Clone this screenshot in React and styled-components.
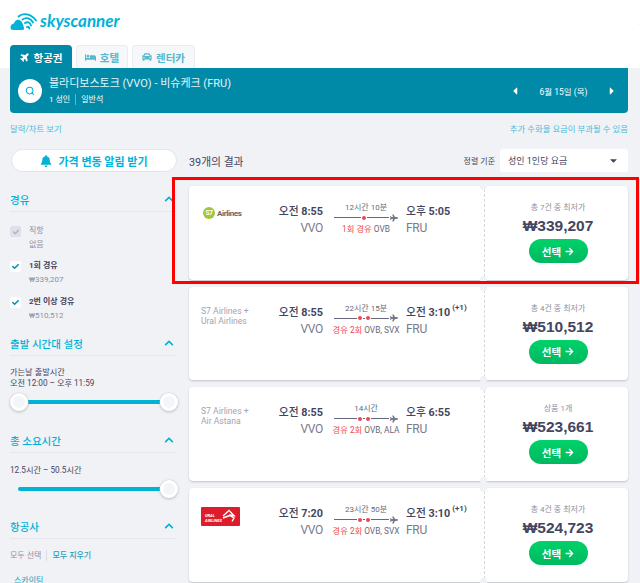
import React from 'react'
import styled, { createGlobalStyle } from 'styled-components'
import { FaPlane, FaBed, FaCar, FaBell, FaChevronUp, FaArrowRight, FaCheck, FaCaretLeft, FaCaretRight, FaCaretDown } from 'react-icons/fa'
import { Search } from 'lucide-react'

const FONT = `Roboto, "Noto Sans CJK KR", sans-serif`
const CYAN = '#00b2d6'
const INK = '#444560'
const GREY = '#8f90a0'

const Global = createGlobalStyle`
  html, body { margin: 0; padding: 0; background: #f1f2f6; height: 100%; overflow: hidden; }
  * { box-sizing: border-box; }
  body { font-family: ${FONT}; color: ${INK}; }
`

const Page = styled.div`
  width: 640px;
  height: 583px;
  overflow: hidden;
`
const Header = styled.header`
  height: 68px;
  background: #fff;
  padding: 0 0 0 10px;
  display: flex;
  flex-direction: column;
`
const TopRow = styled.div`
  height: 45px;
  display: flex;
  justify-content: space-between;
  align-items: flex-start;
  padding-top: 9px;
`
const Logo = styled.div`
  display: flex;
  align-items: center;
  gap: 2px;
  color: ${CYAN};
  font: italic 700 17px/24px Lato, sans-serif;
`
const HelpLink = styled.a`
  color: ${CYAN};
  font-size: 9px;
  margin-right: -24px;
  margin-top: 6px;
  flex-shrink: 0;
`
const Tabs = styled.nav`
  display: flex;
  gap: 4px;
  height: 23px;
`
const Tab = styled.div`
  display: flex;
  align-items: center;
  justify-content: center;
  gap: 4px;
  width: ${p => p.$w}px;
  border-radius: 4px 4px 0 0;
  border: 1px solid ${p => (p.$active ? '#008aa8' : '#ebecf1')};
  border-bottom: 0;
  font-size: 10.5px;
  font-weight: 700;
  color: ${p => (p.$active ? '#fff' : '#55b8cf')};
  background: ${p => (p.$active ? '#008aa8' : '#f6f7f9')};
  & > svg.tilt { transform: rotate(-45deg); }
`
const Banner = styled.section`
  margin: 0 12px 0 10px;
  height: 45px;
  background: #008aa8;
  border-radius: 0 0 4px 4px;
  display: flex;
  align-items: center;
  padding: 0 8px;
  color: #fff;
`
const SearchCircle = styled.div`
  width: 24px;
  height: 24px;
  border-radius: 50%;
  background: #fff;
  color: ${CYAN};
  display: flex;
  align-items: center;
  justify-content: center;
  margin-right: 7px;
`
const RouteBox = styled.div`
  flex: 1;
  display: flex;
  flex-direction: column;
  gap: 3px;
`
const RouteTitle = styled.div`
  font-size: 11px;
  line-height: 14px;
  color: #e4f3f7;
`
const RouteMeta = styled.div`
  font-size: 8px;
  line-height: 11px;
  display: flex;
  gap: 5px;
  & > span + span { border-left: 1px solid #5fb4c8; padding-left: 5px; }
`
const DatePicker = styled.div`
  display: flex;
  align-items: center;
  justify-content: space-between;
  width: 109px;
  font-size: 8.5px;
  margin-right: 2px;
`
const LinksRow = styled.div`
  margin: 0 12px 0 10px;
  height: 28px;
  display: flex;
  align-items: center;
  justify-content: space-between;
  font-size: 8.4px;
  color: #49bcd6;
  padding-top: 1px;
`
const Main = styled.div`
  display: grid;
  grid-template-columns: 167px 439px;
  column-gap: 12px;
  margin-left: 10px;
  padding-top: 8px;
`
const Sidebar = styled.aside`
  display: flex;
  flex-direction: column;
`
const AlertButton = styled.button`
  width: 166px;
  height: 23px;
  margin-left: 1px;
  border: 1px solid #e4e5ec;
  border-radius: 12px;
  background: #fff;
  color: ${CYAN};
  font: 700 11px ${FONT};
  display: flex;
  align-items: center;
  justify-content: center;
  gap: 6px;
  margin-bottom: 16px;
  padding: 0;
`
const FilterHead = styled.div`
  height: 24px;
  display: flex;
  align-items: center;
  justify-content: space-between;
  padding-right: 3px;
  border-bottom: 1px solid #e6e7ec;
  color: ${CYAN};
  font-size: 10.5px;
  font-weight: 500;
  padding-bottom: 1px;
  margin-top: ${p => p.$mt || 0}px;
`
const CheckRow = styled.div`
  display: flex;
  gap: 8px;
  height: ${p => p.$h || 35.5}px;
  padding-top: ${p => p.$pt || 0}px;
`
const Box = styled.div`
  width: 11px;
  height: 11px;
  margin-top: 2px;
  border-radius: 2px;
  background: ${p => (p.$off ? '#dfe0e7' : '#fff')};
  color: ${p => (p.$off ? '#a9aab8' : '#008aa8')};
  display: flex;
  align-items: center;
  justify-content: center;
  flex-shrink: 0;
`
const CheckText = styled.div`
  font-size: 8px;
  line-height: 14px;
  font-weight: ${p => (p.$off ? 400 : 700)};
  color: ${p => (p.$off ? GREY : INK)};
`
const CheckSub = styled.div`
  font-size: 8px;
  line-height: 14px;
  font-weight: 400;
  color: ${GREY};
`
const SliderLabel = styled.div`
  font-size: 8.2px;
  line-height: 11px;
  color: ${INK};
  margin-top: ${p => p.$mt || 0}px;
`
const Track = styled.div`
  position: relative;
  height: 4px;
  background: ${CYAN};
  margin: ${p => p.$mt}px 7px 0 8px;
  border-radius: 2px;
`
const Thumb = styled.span`
  position: absolute;
  top: -7px;
  ${p => (p.$end ? 'right: -8px;' : 'left: -8px;')}
  width: 18px;
  height: 18px;
  border-radius: 50%;
  background: #f4f5f8;
  border: 3px solid #fff;
  box-shadow: 0 0 0 0.5px #d5d6dd, 0 1px 3px rgba(0, 0, 0, 0.25);
`
const AirlineLinks = styled.div`
  display: flex;
  gap: 5px;
  font-size: 8px;
  line-height: 11px;
  margin-top: 11px;
  color: ${GREY};
  & > b { color: #1b9fbd; border-left: 1px solid #dcdde4; padding-left: 5px; font-weight: 500; }
`
const AllianceLabel = styled.div`
  font-size: 8px;
  color: #1b9fbd;
  margin: 13px 0 0 4px;
`
const Results = styled.div`
  display: flex;
  flex-direction: column;
`
const ResultBar = styled.div`
  height: 23px;
  display: flex;
  align-items: center;
  justify-content: space-between;
  margin-bottom: 14px;
  font-size: 10.8px;
`
const SortBox = styled.div`
  display: flex;
  align-items: center;
  gap: 5px;
  font-size: 8px;
`
const SortSelect = styled.div`
  width: 128px;
  height: 23px;
  background: #fff;
  border-radius: 3px;
  display: flex;
  align-items: center;
  justify-content: space-between;
  padding: 0 9px 0 8px;
  font-size: 9px;
`
const CardList = styled.div`
  display: flex;
  flex-direction: column;
  gap: 7.2px;
`
const Card = styled.article`
  position: relative;
  height: 93.5px;
  background: #fff;
  border-radius: 4px;
  box-shadow: 0 1px 2px rgba(0, 0, 0, 0.2);
  display: flex;
`
const Highlight = styled.div`
  position: absolute;
  top: -9px;
  left: -17px;
  right: -11px;
  bottom: -4px;
  border: 3px solid #f00;
  pointer-events: none;
`
const Notch = styled.span`
  position: absolute;
  left: 291px;
  ${p => (p.$bottom ? 'bottom: -3px;' : 'top: -3px;')}
  width: 7px;
  height: 7px;
  border-radius: 50%;
  background: #f1f2f6;
`
const Leg = styled.div`
  width: 295px;
  flex-shrink: 0;
  display: flex;
  padding: 19px 0 0 12px;
`
const Carrier = styled.div`
  width: 75px;
  flex-shrink: 0;
`
const CarrierName = styled.div`
  font-size: 8.6px;
  line-height: 10px;
  color: #a3a4b2;
`
const CarrierLogo = styled.div`
  display: flex;
  align-items: center;
  gap: 2px;
  margin: 2px 0 0 2px;
  font: 700 8px Roboto, sans-serif;
  letter-spacing: -0.4px;
  color: #666;
`
const RedLogo = styled.div`
  width: 39px;
  height: 19px;
  background: #dd1c2c;
  border-radius: 1px;
  color: #fff;
  font: italic 800 4px/5px Roboto, sans-serif;
  padding: 6px 0 0 4px;
  position: relative;
  & svg { position: absolute; right: 4px; top: 2px; }
`
const TimeCol = styled.div`
  width: ${p => p.$w}px;
  flex-shrink: 0;
  text-align: ${p => (p.$right ? 'right' : 'left')};
`
const Time = styled.div`
  font-size: 10.8px;
  line-height: 15px;
  white-space: nowrap;
  font-weight: 500;
  margin-top: -1px;
  & b { font-weight: 700; }
  & sup { font-size: 8px; font-weight: 700; line-height: 0; vertical-align: 6px; margin-left: 2px; }
`
const Code = styled.div`
  font-size: 12px;
  line-height: 17px;
  color: #797a8c;
  letter-spacing: -0.3px;
  margin-top: 1px;
`
const Timeline = styled.div`
  width: 64px;
  margin: -3px 8px 0 11px;
  flex-shrink: 0;
  display: flex;
  flex-direction: column;
  align-items: center;
`
const Duration = styled.div`
  font-size: 8px;
  line-height: 11px;
  color: #66677c;
  white-space: nowrap;
`
const LineRow = styled.div`
  position: relative;
  width: 64px;
  height: 9px;
  display: flex;
  align-items: center;
  color: #77788a;
`
const Line = styled.div`
  flex: 1;
  height: 1px;
  background: #66677c;
  margin-right: 1px;
  padding-left: 5px;
  display: flex;
  align-items: center;
  justify-content: center;
  gap: 4.5px;
`
const Stop = styled.i`
  width: 4px;
  height: 4px;
  border-radius: 50%;
  background: #f04452;
  box-shadow: 0 0 0 1px #fff;
`
const Stops = styled.div`
  font-size: 8.3px;
  line-height: 12px;
  white-space: nowrap;
  color: #66677c;
  margin-top: 1px;
  & em { font-style: normal; color: #f04452; }
`
const PriceBox = styled.div`
  flex: 1;
  border-left: 1px dashed #d5d6dc;
  margin: 3px 0;
  padding: 13px 0 0 3px;
  display: flex;
  flex-direction: column;
  align-items: center;
`
const Deal = styled.div`
  font-size: 8px;
  line-height: 11px;
  color: ${GREY};
`
const Price = styled.div`
  font: 700 15.500px/20px "Liberation Sans", "Noto Sans CJK KR", sans-serif;
  margin: 3px 0;
  color: ${INK};
`
const SelectButton = styled.button`
  width: 59px;
  height: 24px;
  border: 0;
  border-radius: 12px;
  background: linear-gradient(180deg, #00d26a 0%, #00b860 100%);
  color: #fff;
  font: 700 10.5px ${FONT};
  display: flex;
  align-items: center;
  justify-content: center;
  gap: 4px;
  padding: 0;
`

const SkyLogo = () => (
  <svg width="28" height="19" viewBox="0 0 28 19">
    <path d="M0.500 15.500c0-2.300 1.500-3.900 3.500-4.100C5 8.300 7 7.300 9 7.800c2 .5 3.500 3 4.500 6.200l.7 3c-.6.700-1.300 1-2.200 1H3.500C1.700 18 .5 17.300.5 15.500z" fill="#00b2d6" />
    <path d="M8.500 4.500C13 .5 21 1.500 26 8.500M12.500 7.500c3.500-2.500 8-1.500 10.500 3M15 11c2.500-1.500 4.800-.8 6 2.500M17 15c1-.6 1.800-.3 2.300 1.500" fill="none" stroke="#00b2d6" strokeWidth="1.900" strokeLinecap="round" />
  </svg>
)

const S7Mark = () => (
  <svg width="12" height="12" viewBox="0 0 13 13">
    <circle cx="6.500" cy="6.500" r="6.500" fill="#a4c639" />
    <text x="6.500" y="9" textAnchor="middle" fontSize="7" fontWeight="700" fill="#fff" fontFamily="Roboto, sans-serif">S7</text>
  </svg>
)

const UralMark = () => (
  <svg width="15" height="14" viewBox="0 0 15 14">
    <path d="M2 7L8 1.500l5 5-5-.5 5 3-2 3.500M2 9l8-3" fill="none" stroke="#fff" strokeWidth="1.400" />
  </svg>
)

const flights = [
  { dep: '8:55', depLabel: '오전', arr: '5:05', arrLabel: '오후', dur: '12시간 10분', stops: 1, red: '1회 경유', via: 'OVB', deal: '총 7건 중 최저가', price: '₩339,207', logo: 's7', marked: true },
  { dep: '8:55', depLabel: '오전', arr: '3:10', arrLabel: '오전', plus: true, dur: '22시간 15분', stops: 2, red: '경유 2회', via: 'OVB, SVX', deal: '총 4건 중 최저가', price: '₩510,512', names: ['S7 Airlines +', 'Ural Airlines'] },
  { dep: '8:55', depLabel: '오전', arr: '6:55', arrLabel: '오후', dur: '14시간', stops: 2, red: '경유 2회', via: 'OVB, ALA', deal: '상품 1개', price: '₩523,661', names: ['S7 Airlines +', 'Air Astana'] },
  { dep: '7:20', depLabel: '오전', arr: '3:10', arrLabel: '오전', plus: true, dur: '23시간 50분', stops: 2, red: '경유 2회', via: 'OVB, SVX', deal: '총 4건 중 최저가', price: '₩524,723', logo: 'ural' },
]

const FlightCard = ({ f }) => (
  <Card>
    <Leg>
      <Carrier>
        {f.logo === 's7' && <CarrierLogo><S7Mark />Airlines</CarrierLogo>}
        {f.logo === 'ural' && <RedLogo>URAL<br />AIRLINES<UralMark /></RedLogo>}
        {f.names && f.names.map(n => <CarrierName key={n}>{n}</CarrierName>)}
      </Carrier>
      <TimeCol $w={47} $right>
        <Time>{f.depLabel} <b>{f.dep}</b></Time>
        <Code>VVO</Code>
      </TimeCol>
      <Timeline>
        <Duration>{f.dur}</Duration>
        <LineRow>
          <Line>{Array.from({ length: f.stops }).map((_, i) => <Stop key={i} />)}</Line>
          <FaPlane size={8} />
        </LineRow>
        <Stops><em>{f.red}</em> {f.via}</Stops>
      </Timeline>
      <TimeCol $w={60}>
        <Time>{f.arrLabel} <b>{f.arr}</b>{f.plus && <sup>(+1)</sup>}</Time>
        <Code>FRU</Code>
      </TimeCol>
    </Leg>
    <PriceBox>
      <Deal>{f.deal}</Deal>
      <Price>{f.price}</Price>
      <SelectButton>선택 <FaArrowRight size={9} /></SelectButton>
    </PriceBox>
    <Notch />
    <Notch $bottom />
    {f.marked && <Highlight />}
  </Card>
)

const Filter = ({ title, mt }) => (
  <FilterHead $mt={mt}>
    {title}
    <FaChevronUp size={10} />
  </FilterHead>
)

export default function App() {
  return (
    <Page>
      <Global />
      <Header>
        <TopRow>
          <Logo><SkyLogo />skyscanner</Logo>
          <HelpLink>도움말</HelpLink>
        </TopRow>
        <Tabs>
          <Tab $w={62} $active><FaPlane className="tilt" size={10} />항공권</Tab>
          <Tab $w={52}><FaBed size={11} />호텔</Tab>
          <Tab $w={63}><FaCar size={10} />렌터카</Tab>
        </Tabs>
      </Header>
      <Banner>
        <SearchCircle><Search size={10} strokeWidth={2.500} /></SearchCircle>
        <RouteBox>
          <RouteTitle>블라디보스토크 (VVO) - 비슈케크 (FRU)</RouteTitle>
          <RouteMeta><span>1 성인</span><span>일반석</span></RouteMeta>
        </RouteBox>
        <DatePicker>
          <FaCaretLeft size={12} />
          6월 15일 (목)
          <FaCaretRight size={12} />
        </DatePicker>
      </Banner>
      <LinksRow>
        <span>달력/차트 보기</span>
        <span>추가 수화물 요금이 부과될 수 있음</span>
      </LinksRow>
      <Main>
        <Sidebar>
          <AlertButton><FaBell size={12} />가격 변동 알림 받기</AlertButton>
          <Filter title="경유" />
          <CheckRow $pt={12} $h={47}>
            <Box $off><FaCheck size={6} /></Box>
            <CheckText $off>직항<CheckSub>없음</CheckSub></CheckText>
          </CheckRow>
          <CheckRow>
            <Box><FaCheck size={7} /></Box>
            <CheckText>1회 경유<CheckSub>₩339,207</CheckSub></CheckText>
          </CheckRow>
          <CheckRow>
            <Box><FaCheck size={7} /></Box>
            <CheckText>2번 이상 경유<CheckSub>₩510,512</CheckSub></CheckText>
          </CheckRow>
          <Filter title="출발 시간대 설정" mt={2} />
          <SliderLabel $mt={11}>가는날 출발시간</SliderLabel>
          <SliderLabel>오전 12:00 – 오후 11:59</SliderLabel>
          <Track $mt={11}><Thumb /><Thumb $end /></Track>
          <Filter title="총 소요시간" mt={25} />
          <SliderLabel $mt={12}>12.5시간 – 50.5시간</SliderLabel>
          <Track $mt={11}><Thumb $end /></Track>
          <Filter title="항공사" mt={24} />
          <AirlineLinks><span>모두 선택</span><b>모두 지우기</b></AirlineLinks>
          <AllianceLabel>스카이팀</AllianceLabel>
        </Sidebar>
        <Results>
          <ResultBar>
            <span>39개의 결과</span>
            <SortBox>
              정렬 기준
              <SortSelect>성인 1인당 요금<FaCaretDown size={11} /></SortSelect>
            </SortBox>
          </ResultBar>
          <CardList>
            {flights.map(f => <FlightCard key={f.price} f={f} />)}
          </CardList>
        </Results>
      </Main>
    </Page>
  )
}
